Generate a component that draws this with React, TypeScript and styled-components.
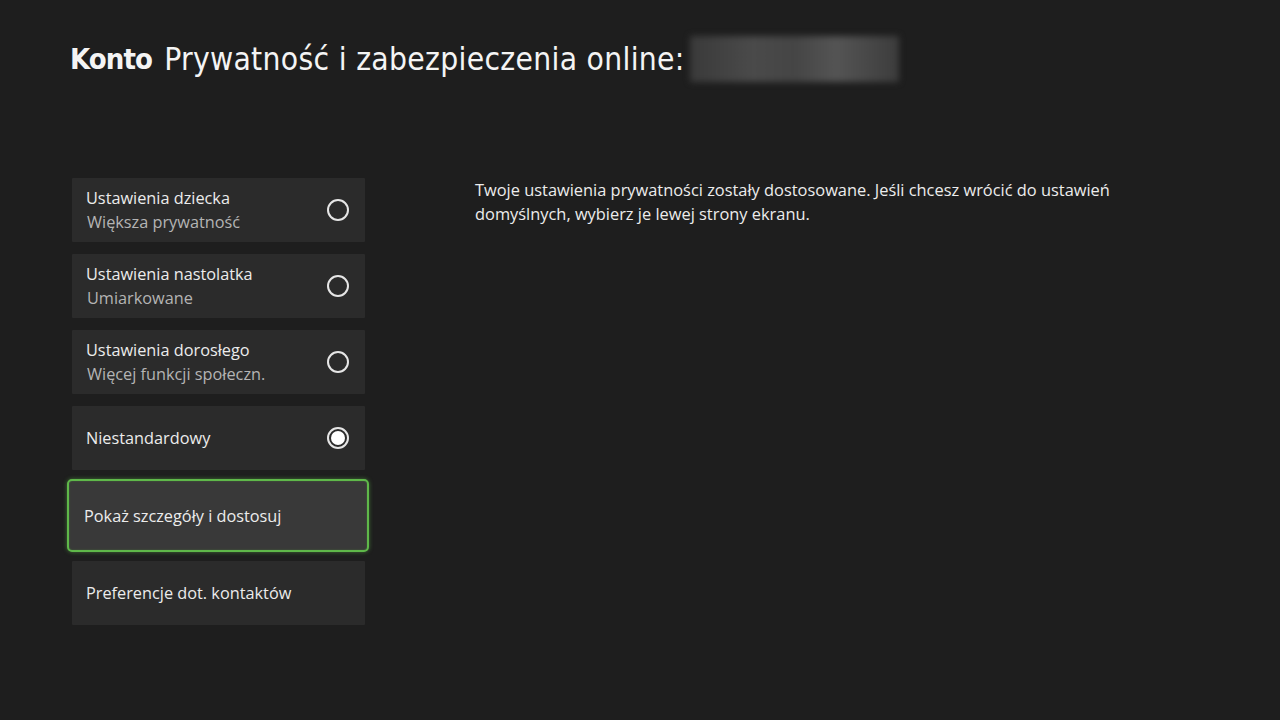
import styled, { createGlobalStyle } from 'styled-components';

/** Global */
const GlobalStyle = createGlobalStyle`
	html, body {
		margin: 0;
		padding: 0;
		background: #1e1e1e;
	}
	body {
		font-family: 'Open Sans', 'Noto Sans', sans-serif;
		color: #f0f0f0;
	}
`;

/** Types */
interface IOption {
	id: string;
	title: string;
	subtitle?: string;
	radio?: 'off' | 'on';
	focused?: boolean;
}

const options: IOption[] = [
	{ id: 'child', title: 'Ustawienia dziecka', subtitle: 'Większa prywatność', radio: 'off' },
	{ id: 'teen', title: 'Ustawienia nastolatka', subtitle: 'Umiarkowane', radio: 'off' },
	{ id: 'adult', title: 'Ustawienia dorosłego', subtitle: 'Więcej funkcji społeczn.', radio: 'off' },
	{ id: 'custom', title: 'Niestandardowy', radio: 'on' },
	{ id: 'details', title: 'Pokaż szczegóły i dostosuj', focused: true },
	{ id: 'contacts', title: 'Preferencje dot. kontaktów' },
];

/** style */
const Page = styled.div`
	width: 1280px;
	height: 720px;
	box-sizing: border-box;
	padding: 36px 0 0 70px;
	overflow: hidden;
`;

const Header = styled.h1`
	display: flex;
	align-items: center;
	margin: 0;
	height: 46px;
	font-family: 'DejaVu Sans Condensed', 'DejaVu Sans', sans-serif;
	font-weight: 400;
	font-size: 31.5px;
	color: #f4f4f4;
	letter-spacing: 0.3px;

	b {
		font-size: 29px;
		font-weight: 700;
		letter-spacing: -0.9px;
		margin-right: 12px;
	}
`;

const HiddenName = styled.span`
	display: inline-block;
	width: 209px;
	height: 46px;
	margin-left: 5px;
	background: linear-gradient(90deg, #3a3a3a 0%, #4a4a4a 30%, #454545 50%, #545454 70%, #3c3c3c 100%);
	filter: blur(3px);
	border-radius: 2px;
`;

const Body = styled.div`
	display: flex;
	margin-top: 96px;
	padding-left: 2px;
`;

const OptionList = styled.ul`
	list-style: none;
	margin: 0;
	padding: 0;
	width: 293px;
	display: flex;
	flex-direction: column;
	gap: 12px;
`;

const OptionCard = styled.li<{ $focused?: boolean }>`
	display: flex;
	align-items: center;
	justify-content: space-between;
	box-sizing: border-box;
	height: ${p => (p.$focused ? '73px' : '64px')};
	margin: ${p => (p.$focused ? '-3px -4px -3px -5px' : '0')};
	padding: ${p => (p.$focused ? '0 0 0 15px' : '0 0 0 14px')};
	background: ${p => (p.$focused ? '#393939' : '#2b2b2b')};
	border: ${p => (p.$focused ? '2px solid #5fb84a' : 'none')};
	border-radius: ${p => (p.$focused ? '5px' : '1px')};
	box-shadow: ${p => (p.$focused ? '0 0 4px rgba(95, 184, 74, 0.55), inset 0 0 2px rgba(95, 184, 74, 0.4)' : 'none')};
`;

const OptionText = styled.div`
	display: flex;
	flex-direction: column;
`;

const OptionTitle = styled.span`
	font-size: 16.3px;
	line-height: 24px;
	color: #ececec;
`;

const OptionSub = styled.span`
	font-size: 16.3px;
	line-height: 24px;
	color: #b4b4b4;
	padding-left: 1px;
`;

const Radio = styled.span<{ $on?: boolean }>`
	display: flex;
	align-items: center;
	justify-content: center;
	width: 18px;
	height: 18px;
	margin-right: 16px;
	border: 2px solid #e6e6e6;
	border-radius: 50%;

	&::after {
		content: '';
		display: ${p => (p.$on ? 'block' : 'none')};
		width: 14px;
		height: 14px;
		border-radius: 50%;
		background: #ffffff;
	}
`;

const Description = styled.p`
	margin: 0 0 0 110px;
	width: 680px;
	font-size: 16.4px;
	line-height: 24px;
	color: #ececec;
`;

/** Component: ustawienia prywatności */
const App = () => {
	return (
		<Page>
			<GlobalStyle />
			<Header>
				<b>Konto</b>
				Prywatność i zabezpieczenia online:
				<HiddenName />
			</Header>

			<Body>
				<OptionList>
					{options.map(opt => (
						<OptionCard key={opt.id} $focused={opt.focused}>
							<OptionText>
								<OptionTitle>{opt.title}</OptionTitle>
								{opt.subtitle && <OptionSub>{opt.subtitle}</OptionSub>}
							</OptionText>
							{opt.radio && <Radio $on={opt.radio === 'on'} />}
						</OptionCard>
					))}
				</OptionList>

				<Description>
					Twoje ustawienia prywatności zostały dostosowane. Jeśli chcesz wrócić do ustawień
					domyślnych, wybierz je lewej strony ekranu.
				</Description>
			</Body>
		</Page>
	);
};

export default App;
